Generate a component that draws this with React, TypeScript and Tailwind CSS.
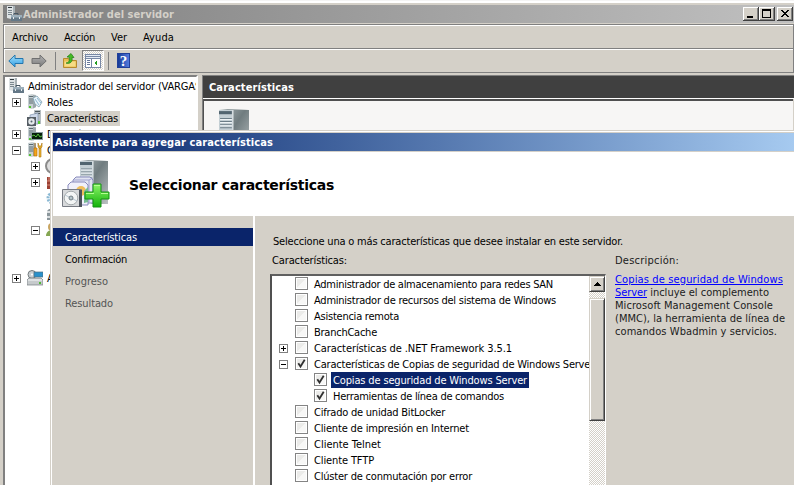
import React, { useLayoutEffect, useRef, useState } from 'react';

type FitProps = { w: number; children: string; className?: string };

/* Text whose tracking is adjusted so the line takes exactly w pixels. */
function Fit({ w, children, className = '' }: FitProps) {
  const ref = useRef<HTMLSpanElement>(null);
  const [spacing, setSpacing] = useState(0);
  useLayoutEffect(() => {
    if (ref.current) {
      const natural = ref.current.getBoundingClientRect().width - spacing * children.length;
      setSpacing((w - natural) / children.length);
    }
  }, [w, children]);
  return (
    <span ref={ref} className={`inline-block shrink-0 whitespace-pre pt-0.5 ${className}`} style={{ letterSpacing: spacing }}>
      {children}
    </span>
  );
}

function Expander({ open }: { open?: boolean }) {
  return (
    <svg width="9" height="9" shapeRendering="crispEdges" className="shrink-0">
      <rect x=".5" y=".5" width="8" height="8" fill="#fff" stroke="#808080" />
      <path d="M2 4.5h5" stroke="#000" />
      {!open && <path d="M4.5 2v5" stroke="#000" />}
    </svg>
  );
}

function Tower() {
  return (
    <g>
      <path d="M1 1l4-1 4 1v12l-4 2-4-1z" fill="#c8d0d3" />
      <path d="M6 1l3 .5V13l-3 1.500z" fill="#9da7ab" />
      <path d="M2 2.500h4M2 5h4M2 7h4M2 9h4" stroke="#596970" />
      <path d="M2 13h2" stroke="#52c530" strokeWidth="2" />
    </g>
  );
}

function Icon({ kind }: { kind: string }) {
  return (
    <svg width="16" height="16" viewBox="0 0 16 16" className="shrink-0">
      {kind === 'server' && (
        <g>
          <path d="M1 0h7v14l-3-1-4-1z" fill="#dde2e4" />
          <path d="M7 0h2v9H7z" fill="#a9b2b6" />
          <path d="M2 4.500h4M2 6.500h4M2 8.500h4" stroke="#7b878e" />
          <path d="M2 1.500h4" stroke="#2f383d" />
          <path d="M8 9.500V7.500h4v2" fill="none" stroke="#465764" />
          <path d="M5 9h11v6H5z" fill="#647887" />
          <path d="M5 9h11v2.500H5z" fill="#9db0bc" />
          <path d="M7.500 11v2M13.500 11v2" stroke="#e8edf0" />
        </g>
      )}
      {kind === 'roles' && (
        <g>
          <Tower />
          <path d="M6 4l4-2 5 6-3 5-4-3z" fill="#eaf4fa" stroke="#7d9eaf" strokeWidth=".8" />
          <path d="M8 5l4 6M10 4l4 5" stroke="#8cb9d5" />
        </g>
      )}
      {kind === 'features' && (
        <g>
          <path d="M7 0h7v14H7z" fill="#b5bdc1" />
          <path d="M8 1.500h5M8 3.500h5" stroke="#4c565c" />
          <path d="M3 5l8-2v11H3z" fill="#ced9eb" stroke="#8397b0" strokeWidth=".7" />
          <path d="M0 7h9v9H0z" fill="#555d64" />
          <circle cx="4.500" cy="11.500" r="3.200" fill="#e5eaec" />
          <circle cx="4.500" cy="11.500" r="1" fill="#53616a" />
          <path d="M11 11h2v3h-2z" fill="#55cf31" />
        </g>
      )}
      {kind === 'monitor' && (
        <g>
          <Tower />
          <path d="M4 6h12v8H4z" fill="#8a9da0" />
          <path d="M5 7h10v6H5z" fill="#07200c" />
          <path d="M5 10l2-1 2 2 2-3 2 3 2-1" fill="none" stroke="#55c23c" />
        </g>
      )}
      {kind === 'tools' && (
        <g>
          <Tower />
          <path d="M8 1v5M7 6h3v8H7z" fill="#f3a51c" stroke="#bd730a" strokeWidth=".7" />
          <path d="M11 1v4l2 2 2-2V1l-1 3h-2zM12 6h2v9h-2z" fill="#edb632" stroke="#ad730c" strokeWidth=".6" />
        </g>
      )}
      {kind === 'storage' && (
        <g>
          <circle cx="5" cy="4.500" r="4" fill="#c9ced1" stroke="#72797c" />
          <circle cx="5" cy="4.500" r="1" fill="#fff" />
          <path d="M7 2h9v5H7z" fill="#2990ca" stroke="#527183" strokeWidth=".7" />
          <path d="M2 8h12l2 2v5H0v-5z" fill="#c6cacc" stroke="#737b80" strokeWidth=".7" />
          <path d="M1 10h14" stroke="#f7f9fa" />
          <path d="M12 12h2v2h-2z" fill="#4fba35" />
        </g>
      )}
    </svg>
  );
}

function NavArrow({ back }: { back?: boolean }) {
  return (
    <svg width="16" height="14" viewBox="0 0 16 14" className="shrink-0">
      <defs>
        <linearGradient id={back ? 'nb' : 'nf'} x2="0" y2="1">
          <stop stopColor={back ? '#a5e2fb' : '#b4b4b4'} />
          <stop offset="1" stopColor={back ? '#2d9be4' : '#787878'} />
        </linearGradient>
      </defs>
      <path
        d={back ? 'M.8 7L7 1v3.500h8v5H7V13z' : 'M15.200 7L9 1v3.500H1v5h8V13z'}
        fill={back ? 'url(#nb)' : 'url(#nf)'}
        stroke={back ? '#2476ad' : '#707070'}
      />
    </svg>
  );
}

function BigTower() {
  return (
    <g>
      <path d="M18 1l8-1 20 1v43H30L18 36z" fill="url(#towerSide)" />
      <path d="M18 1h13v40l-13-8z" fill="#c4cfd4" />
      <path d="M18 2h12v3H18z" fill="#526570" />
      <path d="M19 9h11M19 12h11M19 15h11M19 18h11" stroke="#6c7d87" />
      <path d="M19 10h11M19 13h11M19 16h11" stroke="#eef3f5" />
      <path d="M31 1v41" stroke="#e3e9ec" />
    </g>
  );
}

function WizardIcon() {
  return (
    <svg width="48" height="48" viewBox="0 0 48 48" className="shrink-0">
      <defs>
        <linearGradient id="towerSide" x2="1" y2="1">
          <stop stopColor="#a8b3b5" />
          <stop offset=".45" stopColor="#707c7f" />
          <stop offset="1" stopColor="#bcc2c3" />
        </linearGradient>
        <linearGradient id="plus" x2="0" y2="1">
          <stop stopColor="#8bf567" />
          <stop offset="1" stopColor="#13b20b" />
        </linearGradient>
      </defs>
      <BigTower />
      <path d="M11 20l3-3h14l3 3v23H11z" fill="#e2e4f2" stroke="#8689ba" />
      <path d="M11 20h16v22M27 20l4-2" fill="none" stroke="#a1a3d0" />
      <path d="M6 25l3-3h14l3 3v20H6z" fill="#f0f0fa" stroke="#8789bc" />
      <circle cx="19" cy="31" r="5" fill="#efbd5b" />
      <path d="M22 43V31l4-4v15z" fill="#74bc92" />
      <path d="M.5 29.500h19v17H.5z" fill="#d7d9db" stroke="#777b83" />
      <path d="M17 30h3v17h-3z" fill="#4d535b" />
      <circle cx="9" cy="38" r="6.800" fill="#f3f5f5" stroke="#a3a9ac" />
      <path d="M9 38l-6-3M9 38l6 3" stroke="#b8c5d0" />
      <circle cx="9" cy="38" r="2" fill="#b5c5cb" stroke="#727e84" />
      <path d="M31 24h8v8h8v7h-8v8h-8v-8h-8v-7h8z" fill="url(#plus)" stroke="#149214" />
      <path d="M32 25.500h6M24 33.500h8M39 33.500h7" stroke="#b5ff93" />
    </svg>
  );
}

function WinButton({ kind }: { kind: 'min' | 'max' | 'close' }) {
  return (
    <svg width="16" height="14" shapeRendering="crispEdges" className="shrink-0">
      <path d="M0 0h16v14H0z" fill="#404040" />
      <path d="M0 0h15v13H0z" fill="#fff" />
      <path d="M1 1h14v12H1z" fill="#808080" />
      <path d="M1 1h13v11H1z" fill="#d4d0c8" />
      {kind === 'min' && <path d="M4 9h6v2H4z" />}
      {kind === 'max' && <path d="M3 2h9v9H3zM4 4v6h7V4z" fillRule="evenodd" />}
      {kind === 'close' && <path d="M4 3h2v1h1v1h2V4h1V3h2v1h-1v1h-1v1H9v1h1v1h1v1h1v1h-2V9H9V8H7v1H6v1H4V9h1V8h1V7h1V6H6V5H5V4H4z" />}
    </svg>
  );
}

function Checkbox({ checked }: { checked?: boolean }) {
  return (
    <svg width="13" height="13" className="mb-px block shrink-0">
      <rect x=".5" y=".5" width="12" height="12" fill="#fff" stroke="#848484" />
      <path d="M2 2h9L2 11z" fill="#ebebe9" />
      <path d="M11 2v9H2z" fill="#f7f7f6" />
      {checked && <path d="M3.300 6.200L5.500 9.500L9.700 2.800" fill="none" stroke="#303030" strokeWidth="1.800" />}
    </svg>
  );
}

type Row = { t: string; w: number; exp?: 'open' | 'closed'; on?: boolean; sub?: boolean; sel?: boolean };

const rows: Row[] = [
  { t: 'Administrador de almacenamiento para redes SAN', w: 239 },
  { t: 'Administrador de recursos del sistema de Windows', w: 242 },
  { t: 'Asistencia remota', w: 85 },
  { t: 'BranchCache', w: 63 },
  { t: 'Características de .NET Framework 3.5.1', w: 198 },
  { t: 'Características de Copias de seguridad de Windows Server', w: 280, exp: 'open', on: true },
  { t: 'Copias de seguridad de Windows Server', w: 194, on: true, sub: true, sel: true },
  { t: 'Herramientas de línea de comandos', w: 171, on: true, sub: true },
  { t: 'Cifrado de unidad BitLocker', w: 131 },
  { t: 'Cliente de impresión en Internet', w: 155 },
  { t: 'Cliente Telnet', w: 67 },
  { t: 'Cliente TFTP', w: 60 },
  { t: 'Clúster de conmutación por error', w: 158 },
];
rows[4].exp = 'closed';

function FeatureRow({ r }: { r: Row }) {
  return (
    <div className="flex h-4 items-center pl-[7px]">
      <div className="flex w-4 shrink-0">{r.exp && <Expander open={r.exp === 'open'} />}</div>
      <div className={r.sub ? 'ml-[19px]' : ''}>
        <Checkbox checked={r.on} />
      </div>
      <div className={`ml-1 flex h-4 items-center pl-[2px] pr-[2px] ${r.sel ? 'bg-[#0a246a] text-white' : ''}`}>
        <Fit w={r.w}>{r.t}</Fit>
      </div>
    </div>
  );
}

const checker = 'bg-[repeating-conic-gradient(#ffffff_0%_25%,#d4d0c8_0%_50%)] bg-[length:2px_2px]';

export default function App() {
  return (
    <div className="relative h-[485px] w-[794px] overflow-hidden bg-[#d4d0c8] font-['DejaVu_Sans_Condensed','DejaVu_Sans',sans-serif] text-[11px] leading-4 text-black">
      <div className="flex h-full flex-col">
        <div className="h-[5px] shrink-0 border-b-2 border-t border-b-[#d4d0c8] border-t-[#f4f4f4] bg-white" />
        <div className="ml-[3px] flex h-[18px] shrink-0 items-center bg-linear-to-r from-[#808080] to-[#c0c0c0] pl-[3px] pr-px font-bold text-[#d4d0c8]">
          <Icon kind="server" />
          <Fit w={151} className="ml-px">Administrador del servidor</Fit>
          <div className="ml-auto flex">
            <WinButton kind="min" />
            <WinButton kind="max" />
            <span className="w-[2px]" />
            <WinButton kind="close" />
          </div>
        </div>
        <div className="ml-[3px] mt-px flex h-[25px] shrink-0 items-center border border-[#808080] pl-[8px] shadow-[inset_1px_1px_#fff]">
          <Fit w={36}>Archivo</Fit>
          <Fit w={31} className="ml-4">Acción</Fit>
          <Fit w={16} className="ml-4">Ver</Fit>
          <Fit w={31} className="ml-4">Ayuda</Fit>
        </div>
        <div className="ml-[3px] flex h-6 shrink-0 items-center border border-t-0 border-[#808080] pl-1 shadow-[inset_1px_1px_#fff]">
          <NavArrow back />
          <span className="w-[7px]" />
          <NavArrow />
          <span className="ml-[8px] mr-[7px] h-[18px] w-px bg-[#808080]" />
          <svg width="14" height="16" viewBox="0 0 14 16">
            <path d="M.5 5.500h5l1 2h7v7H.5z" fill="#e9bd53" stroke="#b68a2e" />
            <path d="M1.500 8.500h11v5h-11z" fill="#f7dc85" />
            <path d="M3 10c3 0 4-3 3-6H4l4-3.500L11 4.500H9c1 4-2 7-6 5.500z" fill="#44b925" stroke="#237f15" strokeWidth=".7" />
          </svg>
          <div className={`ml-[5px] flex h-[21px] w-[22px] items-center justify-center border border-b-white border-l-[#808080] border-r-white border-t-[#808080] ${checker}`}>
            <svg width="16" height="14" shapeRendering="crispEdges">
              <path d="M0 0h16v14H0z" fill="#7888a5" />
              <path d="M1 1h14v1H1zM1 3h14v1H1z" fill="#e6ecf5" />
              <path d="M1 5h5v8H1zM7 5h8v8H7z" fill="#fff" />
              <path d="M2 6.500h3M2 8.500h3M2 10.500h3" stroke="#667799" />
              <path d="M12 6v6L9 9z" fill="#249d1d" />
            </svg>
          </div>
          <span className="ml-[4px] mr-[8px] h-[18px] w-px bg-[#808080]" />
          <div className="flex h-[15px] w-[13px] items-center justify-center border border-[#213f99] bg-linear-to-r from-[#173b98] to-[#537ade] font-['Liberation_Serif',serif] text-[15px] font-bold text-white">?</div>
        </div>
        <div className="mt-[2px] flex min-h-0 flex-1 pl-[3px]">
          <div className="flex h-full w-[195px] shrink-0 flex-col overflow-hidden border-2 border-b-0 border-[#808080] border-r-white bg-white pt-px">
            <div className="flex h-4 items-center pl-[3px]">
              <Icon kind="server" />
              <Fit w={173} className="ml-1">Administrador del servidor (VARGAS</Fit>
            </div>
            <div className="flex h-4 items-center pl-[7px]">
              <Expander />
              <span className="ml-[6px] flex"><Icon kind="roles" /></span>
              <Fit w={26} className="ml-1">Roles</Fit>
            </div>
            <div className="flex h-4 items-center pl-[22px]">
              <Icon kind="features" />
              <span className="ml-[2px] flex h-[15px] items-center bg-[#d4d0c8] px-[2px]"><Fit w={71}>Características</Fit></span>
            </div>
            <div className="flex h-4 items-center pl-[7px]">
              <Expander />
              <span className="ml-[6px] flex"><Icon kind="monitor" /></span>
              <span className="ml-1 pt-0.5">Diagnóstico</span>
            </div>
            <div className="flex h-4 items-center pl-[7px]">
              <Expander open />
              <span className="ml-[6px] flex"><Icon kind="tools" /></span>
              <span className="ml-1 pt-0.5">Configuración</span>
            </div>
            <div className="flex h-4 items-center pl-[26px]">
              <Expander />
              <svg width="16" height="16" className="ml-[5px]"><circle cx="8" cy="8" r="7" fill="#ddd" stroke="#8b8b8b" strokeWidth="2" /></svg>
            </div>
            <div className="flex h-4 items-center pl-[26px]">
              <Expander />
              <svg width="16" height="16" className="ml-[6px]"><path d="M1 3h14v12H1z" fill="#9b4033" /><path d="M1 7h14M1 11h14M3 3v4" stroke="#d68a78" /></svg>
            </div>
            <div className="flex h-4 items-center pl-[40px]">
              <svg width="16" height="16"><circle cx="8" cy="8" r="5" fill="#eef7fc" stroke="#8ab8d3" strokeWidth="3" strokeDasharray="2 1" /></svg>
            </div>
            <div className="flex h-4 items-center pl-[41px]">
              <svg width="16" height="16"><path d="M1 5l2-2h12v11H1z" fill="#8b969b" /><path d="M1 6h14M1 11h14" stroke="#dce0e2" strokeWidth="2" /></svg>
            </div>
            <div className="flex h-4 items-center pl-[26px]">
              <Expander open />
              <svg width="16" height="16" className="ml-[6px]"><circle cx="6" cy="5" r="4" fill="#c8a561" /><path d="M0 14c0-8 12-8 12 0z" fill="#85a652" /></svg>
            </div>
            <div className="mt-8 flex h-4 items-center pl-[7px]">
              <Expander />
              <span className="ml-[6px] flex"><Icon kind="storage" /></span>
              <span className="ml-1 pt-0.5">Almacenamiento</span>
            </div>
          </div>
          <div className="ml-[4px] flex flex-1 flex-col border-l border-t border-[#808080]">
            <div className="flex h-[23px] shrink-0 items-center border-b border-white bg-[#404040] pl-[6px] font-bold text-white">
              <Fit w={85}>Características</Fit>
            </div>
            <div className="mr-px flex-1 border-l border-t-2 border-[#505050] bg-[#f7f6f5] pl-[15px] pt-2">
              <svg width="30" height="46" viewBox="18 0 28 44" preserveAspectRatio="none"><BigTower /></svg>
            </div>
          </div>
        </div>
      </div>

      {/* Wizard window lying over the console */}
      <div className="absolute bottom-0 left-[50px] right-0 top-[130px] flex flex-col border-l border-t border-[#d4d0c8] bg-[#d4d0c8] shadow-[inset_1px_1px_#fff]">
        <div className="ml-[2px] mt-[2px] flex h-[18px] shrink-0 items-center bg-linear-to-r from-[#0a246a] to-[#a6caf0] pl-[2px] font-bold text-white">
          <Fit w={218}>Asistente para agregar características</Fit>
        </div>
        <div className="ml-[2px] mt-px flex h-16 shrink-0 items-center bg-white pl-[9px]">
          <WizardIcon />
          <Fit w={205} className="ml-[19px] font-['DejaVu_Sans',sans-serif] text-[14px] font-bold">Seleccionar características</Fit>
        </div>
        <div className="ml-[2px] flex min-h-0 flex-1">
          <div className="w-[202px] shrink-0 border-r-2 border-white pt-3">
            <div className="flex h-[18px] items-center bg-[#0a246a] pl-3 text-white"><Fit w={72}>Características</Fit></div>
            <div className="mt-1 flex h-[18px] items-center pl-3"><Fit w={62}>Confirmación</Fit></div>
            <div className="mt-1 flex h-[18px] items-center pl-3 text-[#555]"><Fit w={43}>Progreso</Fit></div>
            <div className="mt-1 flex h-[18px] items-center pl-3 text-[#555]"><Fit w={48}>Resultado</Fit></div>
          </div>
          <div className="flex min-w-0 flex-1 flex-col pl-[15px] pt-[17px]">
            <div className="flex h-4 shrink-0 items-center pl-[3px]"><Fit w={350}>Seleccione una o más características que desee instalar en este servidor.</Fit></div>
            <div className="mt-[3px] flex min-h-0 flex-1">
              <div className="flex w-[336px] shrink-0 flex-col">
                <div className="flex h-4 shrink-0 items-center pl-[2px]"><Fit w={75}>Características:</Fit></div>
                <div className="mt-[6px] flex min-h-0 flex-1 border-l-2 border-r border-t-2 border-l-[#505050] border-r-white border-t-[#606060] bg-white">
                  <div className="w-[317px] shrink-0 overflow-hidden">
                    {rows.map((r) => <FeatureRow key={r.t} r={r} />)}
                  </div>
                  <div className={`flex w-4 flex-col ${checker}`}>
                    <div className="flex h-4 items-center justify-center border border-b-[#404040] border-l-[#d4d0c8] border-r-[#404040] border-t-[#d4d0c8] bg-[#d4d0c8] shadow-[inset_1px_1px_#fff,inset_-1px_-1px_#808080]">
                      <svg width="7" height="4" shapeRendering="crispEdges"><path d="M3 0h1v1h1v1h1v1h1v1H0V3h1V2h1V1h1z" /></svg>
                    </div>
                    <div className="mt-[6px] h-[123px] border border-b-[#404040] border-l-[#d4d0c8] border-r-[#404040] border-t-[#d4d0c8] bg-[#d4d0c8] shadow-[inset_1px_1px_#fff,inset_-1px_-1px_#808080]" />
                  </div>
                </div>
              </div>
              <div className="ml-[9px] flex flex-col text-[#202020]">
                <div className="flex h-4 items-center"><Fit w={64}>Descripción:</Fit></div>
                <div className="mt-[4px] flex flex-col items-start leading-[11px]">
                  <Fit w={168} className="text-[#0000ff] underline">Copias de seguridad de Windows</Fit>
                  <div className="flex"><Fit w={32} className="text-[#0000ff] underline">Server</Fit><Fit w={122}> incluye el complemento</Fit></div>
                  <Fit w={158}>Microsoft Management Console</Fit>
                  <Fit w={170}>(MMC), la herramienta de línea de</Fit>
                  <Fit w={162}>comandos Wbadmin y servicios.</Fit>
                </div>
              </div>
            </div>
          </div>
        </div>
      </div>
    </div>
  );
}
